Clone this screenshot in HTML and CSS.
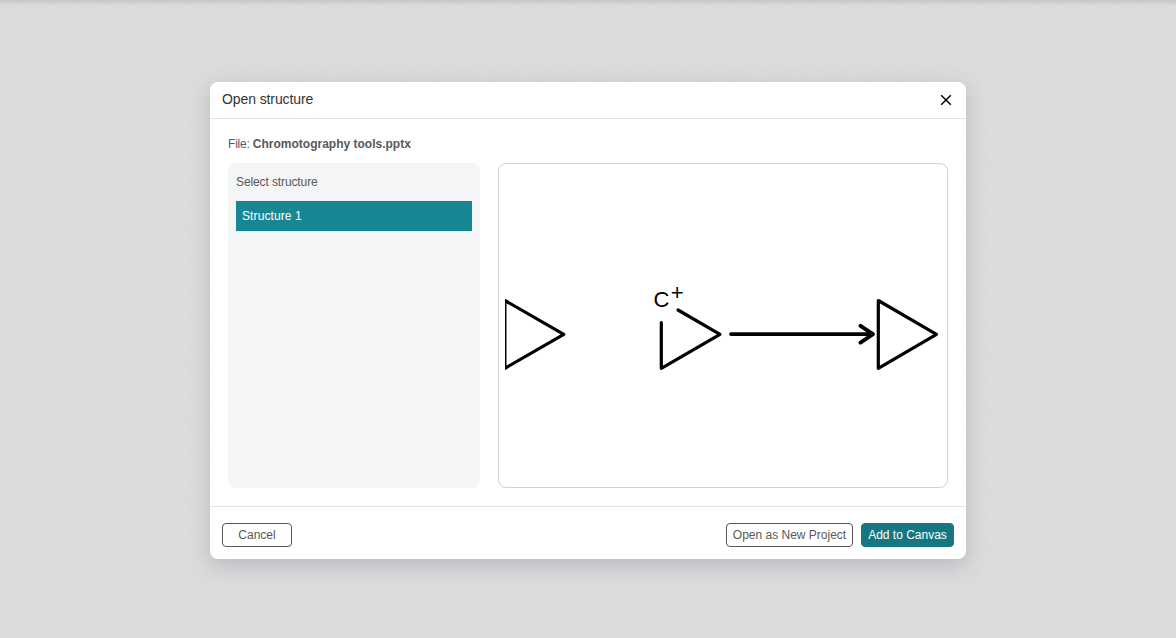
FILE: index.html
```html
<!DOCTYPE html>
<html lang="en">
<head>
<meta charset="utf-8">
<title>Open structure</title>
<link rel="stylesheet" href="styles.css">
</head>
<body>
<div class="backdrop">
  <section class="dialog" role="dialog" aria-labelledby="dialog-title">
    <header class="dialog-header">
      <h1 id="dialog-title" class="dialog-title">Open structure</h1>
      <button class="close" aria-label="Close"><svg width="12" height="12" viewBox="0 0 12 12"><path d="M1.200 1.200 10.800 10.800M10.800 1.200 1.200 10.800"/></svg></button>
    </header>
    <main class="dialog-body">
      <p class="file">File: <b class="file-name">Chromotography tools.pptx</b></p>
      <div class="columns">
        <div class="list">
          <p class="list-title">Select structure</p>
          <div class="list-item">Structure 1</div>
        </div>
        <div class="preview">
          <svg class="drawing" width="436" height="312" viewBox="505 170 436 312">
            <path d="M504.900 300.500 563.800 334.300 504.900 368.300Z"/>
            <path d="M678 310 720 334.300 661.300 368.300V322.500"/>
            <path d="M731 334.100H872M860.500 325.800 873 334.100 860.500 342.600" class="arrow"/>
            <path d="M878.300 300.500 936.500 334.300 878.300 368.300Z"/>
            <text x="653.500" y="307">C</text>
            <text x="670.700" y="300">+</text>
          </svg>
        </div>
      </div>
    </main>
    <footer class="dialog-footer">
      <button class="button cancel">Cancel</button>
      <button class="button project">Open as New Project</button>
      <button class="button primary">Add to Canvas</button>
    </footer>
  </section>
</div>
</body>
</html>
```
FILE: styles.css
```css
* { box-sizing: border-box; }
body { margin: 0; font: 12px/16px "Liberation Sans", Arial, sans-serif; color: #585858; }
p, h1 { margin: 0; }
.backdrop {
  height: 638px;
  padding-top: 82px;
  overflow: hidden;
  background: linear-gradient(#c7c7c7, rgba(220, 220, 220, 0) 6px),
    repeating-linear-gradient(135deg, #dcdcdc 0 5px, #dadada 6px 6.500px, #dcdcdc 7.500px 8px);
}
.dialog {
  width: 756px;
  height: 477px;
  margin: 0 auto;
  display: flex;
  flex-direction: column;
  background: #fff;
  border-radius: 8px;
  box-shadow: 0 6px 20px rgba(103, 104, 132, .3);
}
.dialog-header {
  height: 37px;
  padding: 0 12px;
  display: flex;
  align-items: center;
  justify-content: space-between;
  border-bottom: 1px solid #e1e5ea;
}
.dialog-title { font-size: 14px; font-weight: 400; line-height: 20px; letter-spacing: -.1px; color: #333; padding-bottom: 2px; }
.close { width: 16px; height: 16px; padding: 2px; border: 0; background: none; }
.close svg { display: block; fill: none; stroke: #000; stroke-width: 1.5; }
.dialog-body { flex: 1; padding: 17px 18px 0; }
.file { margin-bottom: 11px; letter-spacing: -.2px; }
.file-name { letter-spacing: 0; }
.columns { display: flex; gap: 18px; height: 325px; }
.list { width: 252px; padding: 11px 8px; background: #f3f5f7; border-radius: 8px; }
.list-title { margin-bottom: 11px; letter-spacing: -.11px; }
.list-item { height: 30px; padding: 0 6px; line-height: 30px; letter-spacing: .1px; background: #188794; color: #fff; }
.preview { flex: 1; padding: 6px; border: 1px solid #cad3dd; border-radius: 8px; }
.drawing { display: block; fill: none; stroke: #000; stroke-width: 3.2; stroke-linecap: round; stroke-linejoin: round; }
.drawing .arrow { stroke-width: 3.8; }
.drawing text { font-size: 22px; fill: #000; stroke: none; }
.dialog-footer {
  height: 53px;
  padding: 16px 12px 0;
  display: flex;
  align-items: flex-start;
  gap: 8px;
  border-top: 1px solid #e1e5ea;
}
.button { height: 24px; padding: 0; border: 1px solid #585858; border-radius: 4px; background: #fff; color: #585858; font: inherit; white-space: nowrap; }
.cancel { width: 70px; margin-right: auto; }
.project { width: 127px; }
.primary { width: 93px; background: #167782; border-color: #167782; color: #fff; }
```
